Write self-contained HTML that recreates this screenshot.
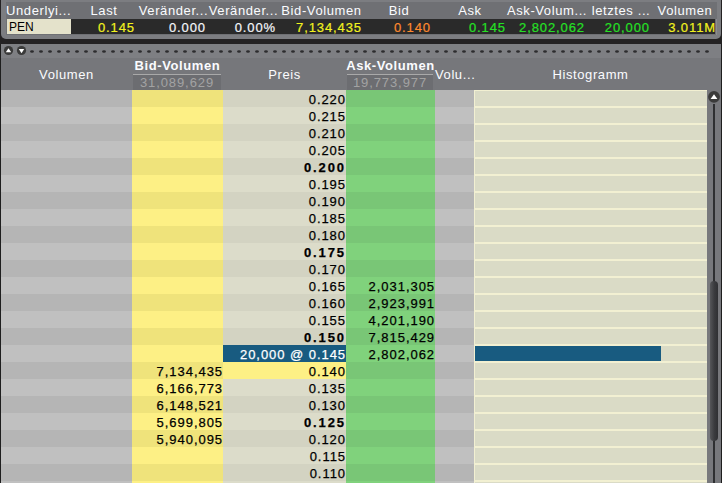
<!DOCTYPE html><html><head><meta charset="utf-8"><style>
*{margin:0;padding:0;box-sizing:border-box}
html,body{width:722px;height:483px;overflow:hidden;background:#242223;font-family:"Liberation Sans",sans-serif;}
.a{position:absolute}
.t{position:absolute;white-space:nowrap;font-size:13px;line-height:17px;letter-spacing:0.6px}
.n{letter-spacing:0.9px;-webkit-text-stroke:0.2px currentColor}
#panel{left:1px;top:-5px;width:720px;height:44px;background:#7c7d81;border-radius:5px;}
#inner{left:6px;top:2px;width:711px;height:33px;background:#6f7074;}
.hd{color:#fbfcff;top:2px;}
#data{left:7px;top:19px;width:708px;height:15px;background:#2a2a2a;}
#pen{left:7px;top:19px;width:64px;height:15px;background:#e4e2cb;}
.dv{top:19px;}
#tool{left:1px;top:44px;width:720px;height:14px;background:#7e7f83;}
#ghead{left:1px;top:58px;width:720px;height:32px;background:#76777b;}
.gh{color:#fbfcff;top:57px;}
.btn{width:9px;height:9px;border-radius:50%;background:#3a3a3a;top:46px;}
.dot{width:2px;height:2px;background:#3c3c3e;top:51px;border-radius:1px}
.row{left:1px;width:706px;height:17px;}
.c{position:absolute;top:0;height:17px;}
.num{font-size:13px;line-height:17px;color:#000;-webkit-text-stroke:0.25px currentColor;text-align:right;white-space:nowrap;position:absolute;top:1px;letter-spacing:0.95px}
.bn{font-weight:bold;letter-spacing:1.9px}
</style></head><body>
<div id="panel" class="a"></div>
<div id="inner" class="a"></div>
<div id="data" class="a"></div>
<div id="pen" class="a"></div>
<div class="a" style="left:716px;top:19px;width:1px;height:16px;background:#8b8c90"></div>
<div class="t hd" style="left:6px;width:64px;text-align:center">Underlyi...</div>
<div class="t hd" style="left:71px;width:66px;text-align:center">Last</div>
<div class="t hd" style="left:138px;width:71px;text-align:center">Veränder...</div>
<div class="t hd" style="left:208px;width:71px;text-align:center">Veränder...</div>
<div class="t hd" style="left:279px;width:85px;text-align:center">Bid-Volumen</div>
<div class="t hd" style="left:364px;width:70px;text-align:center">Bid</div>
<div class="t hd" style="left:434px;width:72px;text-align:center">Ask</div>
<div class="t hd" style="left:506px;width:82px;text-align:center">Ask-Volum...</div>
<div class="t hd" style="left:588px;width:66px;text-align:center">letztes ...</div>
<div class="t hd" style="left:654px;width:62px;text-align:center">Volumen</div>
<div class="t dv n" style="right:587px;color:#f2f21e">0.145</div>
<div class="t dv n" style="right:516px;color:#f4f6fa">0.000</div>
<div class="t dv n" style="right:446px;color:#f4f6fa">0.00%</div>
<div class="t dv n" style="right:360px;color:#f2f21e">7,134,435</div>
<div class="t dv n" style="right:291px;color:#ff8a2e">0.140</div>
<div class="t dv n" style="right:216px;color:#25e025">0.145</div>
<div class="t dv n" style="right:137px;color:#25e025">2,802,062</div>
<div class="t dv n" style="right:72px;color:#25e025">20,000</div>
<div class="t dv n" style="right:6px;color:#f2f21e">3.011M</div>
<div class="t" style="left:9px;top:19px;color:#000;letter-spacing:0;font-size:12px">PEN</div>
<div id="tool" class="a"></div>
<svg class="a" style="left:0;top:44px" width="30" height="14" viewBox="0 0 30 14"><circle cx="8.5" cy="6.5" r="4.6" fill="#3a3a3a"/><path d="M5.8 8.3 L8.5 4.2 L11.2 8.3Z" fill="#fff"/><circle cx="21.5" cy="6.5" r="4.6" fill="#3a3a3a"/><path d="M18.8 5 L24.2 5 L21.5 9.2Z" fill="#fff"/></svg>
<svg class="a" style="left:0;top:44px" width="722" height="14" viewBox="0 0 722 14" fill="#2c2c2e"><ellipse cx="32" cy="7.5" rx="1.9" ry="1.25"/><ellipse cx="41" cy="7.5" rx="1.9" ry="1.25"/><ellipse cx="50" cy="7.5" rx="1.9" ry="1.25"/><ellipse cx="59" cy="7.5" rx="1.9" ry="1.25"/><ellipse cx="68" cy="7.5" rx="1.9" ry="1.25"/><ellipse cx="77" cy="7.5" rx="1.9" ry="1.25"/><ellipse cx="86" cy="7.5" rx="1.9" ry="1.25"/><ellipse cx="95" cy="7.5" rx="1.9" ry="1.25"/><ellipse cx="104" cy="7.5" rx="1.9" ry="1.25"/><ellipse cx="113" cy="7.5" rx="1.9" ry="1.25"/><ellipse cx="122" cy="7.5" rx="1.9" ry="1.25"/><ellipse cx="131" cy="7.5" rx="1.9" ry="1.25"/><ellipse cx="140" cy="7.5" rx="1.9" ry="1.25"/><ellipse cx="149" cy="7.5" rx="1.9" ry="1.25"/><ellipse cx="158" cy="7.5" rx="1.9" ry="1.25"/><ellipse cx="167" cy="7.5" rx="1.9" ry="1.25"/><ellipse cx="176" cy="7.5" rx="1.9" ry="1.25"/><ellipse cx="185" cy="7.5" rx="1.9" ry="1.25"/><ellipse cx="194" cy="7.5" rx="1.9" ry="1.25"/><ellipse cx="203" cy="7.5" rx="1.9" ry="1.25"/><ellipse cx="212" cy="7.5" rx="1.9" ry="1.25"/><ellipse cx="221" cy="7.5" rx="1.9" ry="1.25"/><ellipse cx="230" cy="7.5" rx="1.9" ry="1.25"/><ellipse cx="239" cy="7.5" rx="1.9" ry="1.25"/><ellipse cx="248" cy="7.5" rx="1.9" ry="1.25"/><ellipse cx="257" cy="7.5" rx="1.9" ry="1.25"/><ellipse cx="266" cy="7.5" rx="1.9" ry="1.25"/><ellipse cx="275" cy="7.5" rx="1.9" ry="1.25"/><ellipse cx="284" cy="7.5" rx="1.9" ry="1.25"/><ellipse cx="293" cy="7.5" rx="1.9" ry="1.25"/><ellipse cx="302" cy="7.5" rx="1.9" ry="1.25"/><ellipse cx="311" cy="7.5" rx="1.9" ry="1.25"/><ellipse cx="320" cy="7.5" rx="1.9" ry="1.25"/><ellipse cx="329" cy="7.5" rx="1.9" ry="1.25"/><ellipse cx="338" cy="7.5" rx="1.9" ry="1.25"/><ellipse cx="347" cy="7.5" rx="1.9" ry="1.25"/><ellipse cx="356" cy="7.5" rx="1.9" ry="1.25"/><ellipse cx="365" cy="7.5" rx="1.9" ry="1.25"/><ellipse cx="374" cy="7.5" rx="1.9" ry="1.25"/><ellipse cx="383" cy="7.5" rx="1.9" ry="1.25"/><ellipse cx="392" cy="7.5" rx="1.9" ry="1.25"/><ellipse cx="401" cy="7.5" rx="1.9" ry="1.25"/><ellipse cx="410" cy="7.5" rx="1.9" ry="1.25"/><ellipse cx="419" cy="7.5" rx="1.9" ry="1.25"/><ellipse cx="428" cy="7.5" rx="1.9" ry="1.25"/><ellipse cx="437" cy="7.5" rx="1.9" ry="1.25"/><ellipse cx="446" cy="7.5" rx="1.9" ry="1.25"/><ellipse cx="455" cy="7.5" rx="1.9" ry="1.25"/><ellipse cx="464" cy="7.5" rx="1.9" ry="1.25"/><ellipse cx="473" cy="7.5" rx="1.9" ry="1.25"/><ellipse cx="482" cy="7.5" rx="1.9" ry="1.25"/><ellipse cx="491" cy="7.5" rx="1.9" ry="1.25"/><ellipse cx="500" cy="7.5" rx="1.9" ry="1.25"/><ellipse cx="509" cy="7.5" rx="1.9" ry="1.25"/><ellipse cx="518" cy="7.5" rx="1.9" ry="1.25"/><ellipse cx="527" cy="7.5" rx="1.9" ry="1.25"/><ellipse cx="536" cy="7.5" rx="1.9" ry="1.25"/><ellipse cx="545" cy="7.5" rx="1.9" ry="1.25"/><ellipse cx="554" cy="7.5" rx="1.9" ry="1.25"/><ellipse cx="563" cy="7.5" rx="1.9" ry="1.25"/><ellipse cx="572" cy="7.5" rx="1.9" ry="1.25"/><ellipse cx="581" cy="7.5" rx="1.9" ry="1.25"/><ellipse cx="590" cy="7.5" rx="1.9" ry="1.25"/><ellipse cx="599" cy="7.5" rx="1.9" ry="1.25"/><ellipse cx="608" cy="7.5" rx="1.9" ry="1.25"/><ellipse cx="617" cy="7.5" rx="1.9" ry="1.25"/><ellipse cx="626" cy="7.5" rx="1.9" ry="1.25"/><ellipse cx="635" cy="7.5" rx="1.9" ry="1.25"/><ellipse cx="644" cy="7.5" rx="1.9" ry="1.25"/><ellipse cx="653" cy="7.5" rx="1.9" ry="1.25"/><ellipse cx="662" cy="7.5" rx="1.9" ry="1.25"/><ellipse cx="671" cy="7.5" rx="1.9" ry="1.25"/><ellipse cx="680" cy="7.5" rx="1.9" ry="1.25"/><ellipse cx="689" cy="7.5" rx="1.9" ry="1.25"/><ellipse cx="698" cy="7.5" rx="1.9" ry="1.25"/><ellipse cx="707" cy="7.5" rx="1.9" ry="1.25"/></svg>
<div id="ghead" class="a"></div>
<div class="t gh" style="left:1px;width:131px;text-align:center;top:66px">Volumen</div>
<div class="t gh" style="left:223px;width:123px;text-align:center;top:66px">Preis</div>
<div class="t gh" style="left:435px;width:39px;top:66px">Volu...</div>
<div class="t gh" style="left:474px;width:233px;text-align:center;top:66px">Histogramm</div>
<div class="t gh" style="left:132px;width:91px;text-align:center;font-weight:bold">Bid-Volumen</div>
<div class="t gh" style="left:346px;width:89px;text-align:center;font-weight:bold">Ask-Volumen</div>
<div class="a" style="left:133px;top:74px;width:88px;height:1px;background:#a9a9a9"></div>
<div class="a" style="left:133px;top:75px;width:88px;height:15px;background:#6c6d71"></div>
<div class="a" style="left:347px;top:74px;width:86px;height:1px;background:#a9a9a9"></div>
<div class="a" style="left:347px;top:75px;width:86px;height:15px;background:#6c6d71"></div>
<div class="t" style="left:133px;width:88px;top:74px;text-align:center;color:#a3a3a3;letter-spacing:0.9px">31,089,629</div>
<div class="t" style="left:347px;width:86px;top:74px;text-align:center;color:#a3a3a3;letter-spacing:0.9px">19,773,977</div>
<div class="a row" style="top:90px">
<div class="c" style="left:0;width:131px;background:#b5b5b5"></div>
<div class="c" style="left:131px;width:91px;background:#efe37b"></div>
<div class="c" style="left:222px;width:124px;background:#d3d3c2"></div>
<div class="c" style="left:345px;width:89px;background:#79c676"></div>
<div class="c" style="left:434px;width:39px;background:#b5b5b5"></div>
<div class="c" style="left:473px;width:233px;background:#f2f0d2"></div>
<div class="c" style="left:474px;top:1px;width:232px;height:15px;background:#dadbc6"></div>
<div class="num" style="right:361px">0.220</div>
</div>
<div class="a row" style="top:107px">
<div class="c" style="left:0;width:131px;background:#c0c0c0"></div>
<div class="c" style="left:131px;width:91px;background:#fdf085"></div>
<div class="c" style="left:222px;width:124px;background:#dcdcca"></div>
<div class="c" style="left:345px;width:89px;background:#80d27c"></div>
<div class="c" style="left:434px;width:39px;background:#c0c0c0"></div>
<div class="c" style="left:473px;width:233px;background:#f2f0d2"></div>
<div class="c" style="left:474px;top:1px;width:232px;height:15px;background:#dadbc6"></div>
<div class="num" style="right:361px">0.215</div>
</div>
<div class="a row" style="top:124px">
<div class="c" style="left:0;width:131px;background:#b5b5b5"></div>
<div class="c" style="left:131px;width:91px;background:#efe37b"></div>
<div class="c" style="left:222px;width:124px;background:#d3d3c2"></div>
<div class="c" style="left:345px;width:89px;background:#79c676"></div>
<div class="c" style="left:434px;width:39px;background:#b5b5b5"></div>
<div class="c" style="left:473px;width:233px;background:#f2f0d2"></div>
<div class="c" style="left:474px;top:1px;width:232px;height:15px;background:#dadbc6"></div>
<div class="num" style="right:361px">0.210</div>
</div>
<div class="a row" style="top:141px">
<div class="c" style="left:0;width:131px;background:#c0c0c0"></div>
<div class="c" style="left:131px;width:91px;background:#fdf085"></div>
<div class="c" style="left:222px;width:124px;background:#dcdcca"></div>
<div class="c" style="left:345px;width:89px;background:#80d27c"></div>
<div class="c" style="left:434px;width:39px;background:#c0c0c0"></div>
<div class="c" style="left:473px;width:233px;background:#f2f0d2"></div>
<div class="c" style="left:474px;top:1px;width:232px;height:15px;background:#dadbc6"></div>
<div class="num" style="right:361px">0.205</div>
</div>
<div class="a row" style="top:158px">
<div class="c" style="left:0;width:131px;background:#b5b5b5"></div>
<div class="c" style="left:131px;width:91px;background:#efe37b"></div>
<div class="c" style="left:222px;width:124px;background:#d3d3c2"></div>
<div class="c" style="left:345px;width:89px;background:#79c676"></div>
<div class="c" style="left:434px;width:39px;background:#b5b5b5"></div>
<div class="c" style="left:473px;width:233px;background:#f2f0d2"></div>
<div class="c" style="left:474px;top:1px;width:232px;height:15px;background:#dadbc6"></div>
<div class="num bn" style="right:361px">0.200</div>
</div>
<div class="a row" style="top:175px">
<div class="c" style="left:0;width:131px;background:#c0c0c0"></div>
<div class="c" style="left:131px;width:91px;background:#fdf085"></div>
<div class="c" style="left:222px;width:124px;background:#dcdcca"></div>
<div class="c" style="left:345px;width:89px;background:#80d27c"></div>
<div class="c" style="left:434px;width:39px;background:#c0c0c0"></div>
<div class="c" style="left:473px;width:233px;background:#f2f0d2"></div>
<div class="c" style="left:474px;top:1px;width:232px;height:15px;background:#dadbc6"></div>
<div class="num" style="right:361px">0.195</div>
</div>
<div class="a row" style="top:192px">
<div class="c" style="left:0;width:131px;background:#b5b5b5"></div>
<div class="c" style="left:131px;width:91px;background:#efe37b"></div>
<div class="c" style="left:222px;width:124px;background:#d3d3c2"></div>
<div class="c" style="left:345px;width:89px;background:#79c676"></div>
<div class="c" style="left:434px;width:39px;background:#b5b5b5"></div>
<div class="c" style="left:473px;width:233px;background:#f2f0d2"></div>
<div class="c" style="left:474px;top:1px;width:232px;height:15px;background:#dadbc6"></div>
<div class="num" style="right:361px">0.190</div>
</div>
<div class="a row" style="top:209px">
<div class="c" style="left:0;width:131px;background:#c0c0c0"></div>
<div class="c" style="left:131px;width:91px;background:#fdf085"></div>
<div class="c" style="left:222px;width:124px;background:#dcdcca"></div>
<div class="c" style="left:345px;width:89px;background:#80d27c"></div>
<div class="c" style="left:434px;width:39px;background:#c0c0c0"></div>
<div class="c" style="left:473px;width:233px;background:#f2f0d2"></div>
<div class="c" style="left:474px;top:1px;width:232px;height:15px;background:#dadbc6"></div>
<div class="num" style="right:361px">0.185</div>
</div>
<div class="a row" style="top:226px">
<div class="c" style="left:0;width:131px;background:#b5b5b5"></div>
<div class="c" style="left:131px;width:91px;background:#efe37b"></div>
<div class="c" style="left:222px;width:124px;background:#d3d3c2"></div>
<div class="c" style="left:345px;width:89px;background:#79c676"></div>
<div class="c" style="left:434px;width:39px;background:#b5b5b5"></div>
<div class="c" style="left:473px;width:233px;background:#f2f0d2"></div>
<div class="c" style="left:474px;top:1px;width:232px;height:15px;background:#dadbc6"></div>
<div class="num" style="right:361px">0.180</div>
</div>
<div class="a row" style="top:243px">
<div class="c" style="left:0;width:131px;background:#c0c0c0"></div>
<div class="c" style="left:131px;width:91px;background:#fdf085"></div>
<div class="c" style="left:222px;width:124px;background:#dcdcca"></div>
<div class="c" style="left:345px;width:89px;background:#80d27c"></div>
<div class="c" style="left:434px;width:39px;background:#c0c0c0"></div>
<div class="c" style="left:473px;width:233px;background:#f2f0d2"></div>
<div class="c" style="left:474px;top:1px;width:232px;height:15px;background:#dadbc6"></div>
<div class="num bn" style="right:361px">0.175</div>
</div>
<div class="a row" style="top:260px">
<div class="c" style="left:0;width:131px;background:#b5b5b5"></div>
<div class="c" style="left:131px;width:91px;background:#efe37b"></div>
<div class="c" style="left:222px;width:124px;background:#d3d3c2"></div>
<div class="c" style="left:345px;width:89px;background:#79c676"></div>
<div class="c" style="left:434px;width:39px;background:#b5b5b5"></div>
<div class="c" style="left:473px;width:233px;background:#f2f0d2"></div>
<div class="c" style="left:474px;top:1px;width:232px;height:15px;background:#dadbc6"></div>
<div class="num" style="right:361px">0.170</div>
</div>
<div class="a row" style="top:277px">
<div class="c" style="left:0;width:131px;background:#c0c0c0"></div>
<div class="c" style="left:131px;width:91px;background:#fdf085"></div>
<div class="c" style="left:222px;width:124px;background:#dcdcca"></div>
<div class="c" style="left:345px;width:89px;background:#80d27c"></div>
<div class="c" style="left:434px;width:39px;background:#c0c0c0"></div>
<div class="c" style="left:473px;width:233px;background:#f2f0d2"></div>
<div class="c" style="left:474px;top:1px;width:232px;height:15px;background:#dadbc6"></div>
<div class="num" style="right:361px">0.165</div>
<div class="num" style="right:272px">2,031,305</div>
</div>
<div class="a row" style="top:294px">
<div class="c" style="left:0;width:131px;background:#b5b5b5"></div>
<div class="c" style="left:131px;width:91px;background:#efe37b"></div>
<div class="c" style="left:222px;width:124px;background:#d3d3c2"></div>
<div class="c" style="left:345px;width:89px;background:#79c676"></div>
<div class="c" style="left:434px;width:39px;background:#b5b5b5"></div>
<div class="c" style="left:473px;width:233px;background:#f2f0d2"></div>
<div class="c" style="left:474px;top:1px;width:232px;height:15px;background:#dadbc6"></div>
<div class="num" style="right:361px">0.160</div>
<div class="num" style="right:272px">2,923,991</div>
</div>
<div class="a row" style="top:311px">
<div class="c" style="left:0;width:131px;background:#c0c0c0"></div>
<div class="c" style="left:131px;width:91px;background:#fdf085"></div>
<div class="c" style="left:222px;width:124px;background:#dcdcca"></div>
<div class="c" style="left:345px;width:89px;background:#80d27c"></div>
<div class="c" style="left:434px;width:39px;background:#c0c0c0"></div>
<div class="c" style="left:473px;width:233px;background:#f2f0d2"></div>
<div class="c" style="left:474px;top:1px;width:232px;height:15px;background:#dadbc6"></div>
<div class="num" style="right:361px">0.155</div>
<div class="num" style="right:272px">4,201,190</div>
</div>
<div class="a row" style="top:328px">
<div class="c" style="left:0;width:131px;background:#b5b5b5"></div>
<div class="c" style="left:131px;width:91px;background:#efe37b"></div>
<div class="c" style="left:222px;width:124px;background:#d3d3c2"></div>
<div class="c" style="left:345px;width:89px;background:#79c676"></div>
<div class="c" style="left:434px;width:39px;background:#b5b5b5"></div>
<div class="c" style="left:473px;width:233px;background:#f2f0d2"></div>
<div class="c" style="left:474px;top:1px;width:232px;height:15px;background:#dadbc6"></div>
<div class="num bn" style="right:361px">0.150</div>
<div class="num" style="right:272px">7,815,429</div>
</div>
<div class="a row" style="top:345px">
<div class="c" style="left:0;width:131px;background:#c0c0c0"></div>
<div class="c" style="left:131px;width:91px;background:#fdf085"></div>
<div class="c" style="left:222px;width:124px;background:#185b80"></div>
<div class="c" style="left:345px;width:89px;background:#80d27c"></div>
<div class="c" style="left:434px;width:39px;background:#c0c0c0"></div>
<div class="c" style="left:473px;width:233px;background:#f2f0d2"></div>
<div class="c" style="left:474px;top:1px;width:232px;height:15px;background:#dadbc6"></div>
<div class="c" style="left:474px;top:1px;width:186px;height:15px;background:#185b80"></div>
<div class="num" style="right:361px;color:#fff">20,000 @ 0.145</div>
<div class="num" style="right:272px">2,802,062</div>
</div>
<div class="a row" style="top:362px">
<div class="c" style="left:0;width:131px;background:#b5b5b5"></div>
<div class="c" style="left:131px;width:91px;background:#efe37b"></div>
<div class="c" style="left:222px;width:124px;background:#fdf085"></div>
<div class="c" style="left:345px;width:89px;background:#79c676"></div>
<div class="c" style="left:434px;width:39px;background:#b5b5b5"></div>
<div class="c" style="left:473px;width:233px;background:#f2f0d2"></div>
<div class="c" style="left:474px;top:1px;width:232px;height:15px;background:#dadbc6"></div>
<div class="num" style="right:361px">0.140</div>
<div class="num" style="right:484px">7,134,435</div>
</div>
<div class="a row" style="top:379px">
<div class="c" style="left:0;width:131px;background:#c0c0c0"></div>
<div class="c" style="left:131px;width:91px;background:#fdf085"></div>
<div class="c" style="left:222px;width:124px;background:#dcdcca"></div>
<div class="c" style="left:345px;width:89px;background:#80d27c"></div>
<div class="c" style="left:434px;width:39px;background:#c0c0c0"></div>
<div class="c" style="left:473px;width:233px;background:#f2f0d2"></div>
<div class="c" style="left:474px;top:1px;width:232px;height:15px;background:#dadbc6"></div>
<div class="num" style="right:361px">0.135</div>
<div class="num" style="right:484px">6,166,773</div>
</div>
<div class="a row" style="top:396px">
<div class="c" style="left:0;width:131px;background:#b5b5b5"></div>
<div class="c" style="left:131px;width:91px;background:#efe37b"></div>
<div class="c" style="left:222px;width:124px;background:#d3d3c2"></div>
<div class="c" style="left:345px;width:89px;background:#79c676"></div>
<div class="c" style="left:434px;width:39px;background:#b5b5b5"></div>
<div class="c" style="left:473px;width:233px;background:#f2f0d2"></div>
<div class="c" style="left:474px;top:1px;width:232px;height:15px;background:#dadbc6"></div>
<div class="num" style="right:361px">0.130</div>
<div class="num" style="right:484px">6,148,521</div>
</div>
<div class="a row" style="top:413px">
<div class="c" style="left:0;width:131px;background:#c0c0c0"></div>
<div class="c" style="left:131px;width:91px;background:#fdf085"></div>
<div class="c" style="left:222px;width:124px;background:#dcdcca"></div>
<div class="c" style="left:345px;width:89px;background:#80d27c"></div>
<div class="c" style="left:434px;width:39px;background:#c0c0c0"></div>
<div class="c" style="left:473px;width:233px;background:#f2f0d2"></div>
<div class="c" style="left:474px;top:1px;width:232px;height:15px;background:#dadbc6"></div>
<div class="num bn" style="right:361px">0.125</div>
<div class="num" style="right:484px">5,699,805</div>
</div>
<div class="a row" style="top:430px">
<div class="c" style="left:0;width:131px;background:#b5b5b5"></div>
<div class="c" style="left:131px;width:91px;background:#efe37b"></div>
<div class="c" style="left:222px;width:124px;background:#d3d3c2"></div>
<div class="c" style="left:345px;width:89px;background:#79c676"></div>
<div class="c" style="left:434px;width:39px;background:#b5b5b5"></div>
<div class="c" style="left:473px;width:233px;background:#f2f0d2"></div>
<div class="c" style="left:474px;top:1px;width:232px;height:15px;background:#dadbc6"></div>
<div class="num" style="right:361px">0.120</div>
<div class="num" style="right:484px">5,940,095</div>
</div>
<div class="a row" style="top:447px">
<div class="c" style="left:0;width:131px;background:#c0c0c0"></div>
<div class="c" style="left:131px;width:91px;background:#fdf085"></div>
<div class="c" style="left:222px;width:124px;background:#dcdcca"></div>
<div class="c" style="left:345px;width:89px;background:#80d27c"></div>
<div class="c" style="left:434px;width:39px;background:#c0c0c0"></div>
<div class="c" style="left:473px;width:233px;background:#f2f0d2"></div>
<div class="c" style="left:474px;top:1px;width:232px;height:15px;background:#dadbc6"></div>
<div class="num" style="right:361px">0.115</div>
</div>
<div class="a row" style="top:464px">
<div class="c" style="left:0;width:131px;background:#b5b5b5"></div>
<div class="c" style="left:131px;width:91px;background:#efe37b"></div>
<div class="c" style="left:222px;width:124px;background:#d3d3c2"></div>
<div class="c" style="left:345px;width:89px;background:#79c676"></div>
<div class="c" style="left:434px;width:39px;background:#b5b5b5"></div>
<div class="c" style="left:473px;width:233px;background:#f2f0d2"></div>
<div class="c" style="left:474px;top:1px;width:232px;height:15px;background:#dadbc6"></div>
<div class="num" style="right:361px">0.110</div>
</div>
<div class="a row" style="top:481px">
<div class="c" style="left:0;width:131px;background:#c0c0c0"></div>
<div class="c" style="left:131px;width:91px;background:#fdf085"></div>
<div class="c" style="left:222px;width:124px;background:#dcdcca"></div>
<div class="c" style="left:345px;width:89px;background:#80d27c"></div>
<div class="c" style="left:434px;width:39px;background:#c0c0c0"></div>
<div class="c" style="left:473px;width:233px;background:#f2f0d2"></div>
<div class="c" style="left:474px;top:1px;width:232px;height:15px;background:#dadbc6"></div>
</div>
<div class="a" style="left:707px;top:90px;width:14px;height:393px;background:#77787c"></div>
<div class="a" style="left:713px;top:104px;width:2px;height:379px;background:#2e2f31"></div>
<div class="a" style="left:710px;top:281px;width:8px;height:160px;border-radius:4px;background:linear-gradient(90deg,#555659,#3a3b3e 55%,#2f3033)"></div>
<svg class="a" style="left:707px;top:90px" width="14" height="14" viewBox="0 0 14 14"><circle cx="7" cy="6.8" r="5.9" fill="#3a3a3a"/><path d="M3.6 9 L7 4.2 L10.4 9Z" fill="#fff"/></svg>
<div class="a" style="left:721px;top:44px;width:1px;height:439px;background:#1e1e1e"></div>
<div class="a" style="left:0px;top:44px;width:1px;height:439px;background:#1e1e1e"></div>
</body></html>
